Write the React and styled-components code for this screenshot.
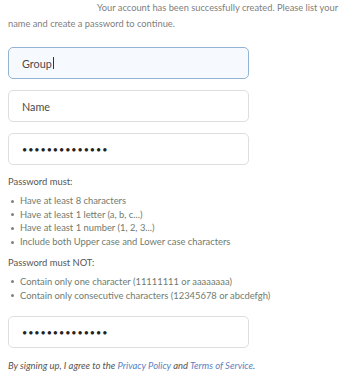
import React from "react";
import styled, { createGlobalStyle } from "styled-components";

const Global = createGlobalStyle`
  html, body { margin: 0; padding: 0; background: #fff; }
  body { font-family: Lato, "Noto Sans", sans-serif; }
`;

const Page = styled.div`
  width: 347px;
  height: 390px;
  box-sizing: border-box;
  padding: 0 8px;
  overflow: hidden;
`;

const Intro = styled.p`
  margin: 0;
  font-size: 9.3px;
  line-height: 16px;
  color: #808080;
  text-indent: 89px;
  width: 335px;
`;

const Fields = styled.div`
  display: flex;
  flex-direction: column;
  gap: 11px;
  margin-top: 15px;
  width: 241px;
`;

const Field = styled.div`
  height: 32px;
  box-sizing: border-box;
  border: 1px solid ${(p) => (p.$focused ? "#93b3d3" : "#dedede")};
  background: ${(p) => (p.$focused ? "#f6faff" : "#ffffff")};
  border-radius: 5px;
  display: flex;
  align-items: center;
  padding-left: 13px;
  font-size: ${(p) => (p.$secret ? "9px" : "10.8px")};
  letter-spacing: ${(p) => (p.$secret ? "0.95px" : "0")};
  color: ${(p) => (p.$secret ? "#222" : "#4a4a4a")};
`;

const Caret = styled.span`
  display: inline-block;
  width: 1px;
  height: 12px;
  background: #333;
  margin-left: 1px;
`;

const Heading = styled.div`
  margin-top: ${(p) => p.$top}px;
  font-size: 9.4px;
  line-height: 13px;
  color: #555;
`;

const Rules = styled.ul`
  list-style: none;
  margin: 6px 0 0;
  padding: 0;
`;

const Rule = styled.li`
  position: relative;
  padding-left: 12px;
  font-size: 9.4px;
  line-height: 13.7px;
  color: #6f7b6f;
  &::before {
    content: "";
    position: absolute;
    left: 2.5px;
    top: 5.5px;
    width: 3px;
    height: 3px;
    border-radius: 50%;
    background: #808080;
  }
`;

const LastField = styled(Field)`
  margin-top: 14px;
  width: 241px;
`;

const Terms = styled.p`
  margin: 11px 0 0;
  font-size: 9.45px;
  line-height: 13px;
  font-style: italic;
  color: #555;
`;

const Link = styled.a`
  color: #5b7fbf;
  text-decoration: none;
`;

const dots = "••••••••••••••";

export default function App() {
  return (
    <>
      <Global />
      <Page>
        <Intro>
          Your account has been successfully created. Please list your name and create a password to continue.
        </Intro>
        <Fields>
          <Field $focused>
            Group<Caret />
          </Field>
          <Field>Name</Field>
          <Field $secret>{dots}</Field>
        </Fields>
        <Heading $top={10}>Password must:</Heading>
        <Rules>
          <Rule>Have at least 8 characters</Rule>
          <Rule>Have at least 1 letter (a, b, c...)</Rule>
          <Rule>Have at least 1 number (1, 2, 3...)</Rule>
          <Rule>Include both Upper case and Lower case characters</Rule>
        </Rules>
        <Heading $top={7}>Password must NOT:</Heading>
        <Rules>
          <Rule>Contain only one character (11111111 or aaaaaaaa)</Rule>
          <Rule>Contain only consecutive characters (12345678 or abcdefgh)</Rule>
        </Rules>
        <LastField $secret>{dots}</LastField>
        <Terms>
          By signing up, I agree to the <Link href="#">Privacy Policy</Link> and{" "}
          <Link href="#">Terms of Service</Link>.
        </Terms>
      </Page>
    </>
  );
}
